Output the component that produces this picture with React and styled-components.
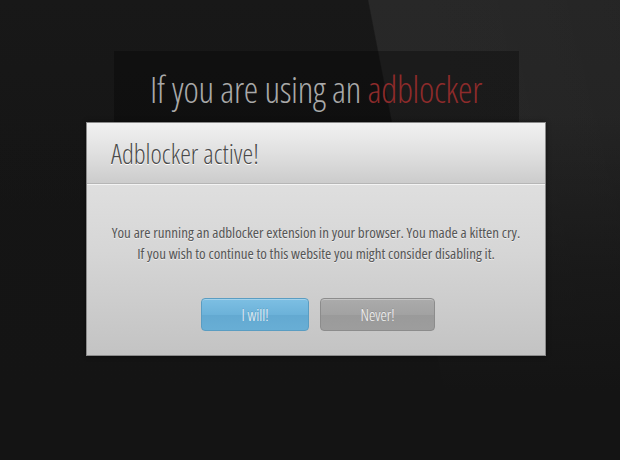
import styled, { createGlobalStyle } from "styled-components"

const GlobalStyle = createGlobalStyle`
    html, body {
        margin: 0;
        padding: 0;
        height: 100%;
    }
    body {
        background: #141414;
        font-family: "Open Sans", "Liberation Sans", sans-serif;
    }
`

const Page = styled.div`
    width: 620px;
    height: 460px;
    overflow: hidden;
    background:
        linear-gradient(180deg, rgba(20,20,20,0) 0%, rgba(20,20,20,0) 25%, rgba(20,20,20,0.7) 60%, #141414 85%),
        linear-gradient(79deg, rgba(0,0,0,0) 0%, rgba(0,0,0,0) 64.4%, rgba(255,255,255,0.07) 64.6%, rgba(255,255,255,0.065) 85%, rgba(255,255,255,0.06) 100%),
        linear-gradient(180deg, #181818 0%, #151515 45%, #141414 100%);
    display: flex;
    justify-content: center;
    padding: 51px 0 0 12px;
    box-sizing: border-box;
`

const Stage = styled.div`
    width: 405px;
    display: flex;
    flex-direction: column;
    align-items: center;
`

const Banner = styled.div`
    width: 100%;
    height: 150px;
    background: rgba(0, 0, 0, 0.3);
    display: flex;
    justify-content: center;
    padding-top: 14px;
    box-sizing: border-box;
`

const Headline = styled.h1`
    margin: 0;
    font-family: "Open Sans", sans-serif;
    font-weight: 300;
    font-stretch: 75%;
    font-size: 36.5px;
    line-height: 48px;
    color: #a9a9a9;
    letter-spacing: -0.3px;
`

const Accent = styled.span`
    color: #8e2b2b;
`

const Modal = styled.div`
    margin-top: -79px;
    width: 458px;
    border: 1px solid #8a8a8a;
    box-shadow: 0 0 4px rgba(0, 0, 0, 0.5);
    background: linear-gradient(180deg, #e7e7e7 0%, #d6d6d6 55%, #c3c3c3 100%);
`

const Header = styled.div`
    height: 60px;
    padding-left: 24px;
    display: flex;
    align-items: center;
    background: linear-gradient(180deg, #f1f1f1 0%, #e0e0e0 50%, #cccccc 100%);
    border-bottom: 1px solid #b6b6b6;
    box-shadow: 0 1px 0 #f4f4f4;
`

const HeaderTitle = styled.h2`
    margin: 0;
    font-family: "Open Sans", sans-serif;
    font-weight: 300;
    font-stretch: 75%;
    font-size: 27px;
    color: #4a4a4a;
    text-shadow: 0 1px 0 #fff;
`

const Body = styled.div`
    padding: 38px 20px 24px;
    display: flex;
    flex-direction: column;
    align-items: center;
`

const Message = styled.p`
    margin: 0;
    text-align: center;
    font-family: "Open Sans", sans-serif;
    font-weight: 400;
    font-stretch: 75%;
    font-size: 15px;
    line-height: 21px;
    color: #555;
    text-shadow: 0 1px 0 rgba(255, 255, 255, 0.6);
`

const Actions = styled.div`
    margin: 34px 0 0 4px;
    display: flex;
    gap: 11px;
`

const Button = styled.button`
    width: ${props => props.wide ? "115px" : "108px"};
    height: 33px;
    border-radius: 4px;
    font-family: "Open Sans", sans-serif;
    font-weight: 300;
    font-stretch: 75%;
    font-size: 16px;
    color: #f8f8f8;
    cursor: pointer;
    border: 1px solid ${props => props.primary ? "#5a9dc2" : "#8c8c8c"};
    background: ${props => props.primary
        ? "linear-gradient(180deg, #7dbfe3 0%, #6cb2d9 50%, #63a9d1 51%, #68aed5 100%)"
        : "linear-gradient(180deg, #ababab 0%, #a2a2a2 50%, #9a9a9a 51%, #9d9d9d 100%)"};
    box-shadow: inset 0 1px 0 rgba(255, 255, 255, 0.3);
    text-shadow: 0 -1px 0 rgba(0, 0, 0, 0.15);
`

const App = () => {
    return (
        <>
            <GlobalStyle />
            <Page>
                <Stage>
                    <Banner>
                        <Headline>If you are using an <Accent>adblocker</Accent></Headline>
                    </Banner>
                    <Modal>
                        <Header>
                            <HeaderTitle>Adblocker active!</HeaderTitle>
                        </Header>
                        <Body>
                            <Message>
                                You are running an adblocker extension in your browser. You made a kitten cry.<br />
                                If you wish to continue to this website you might consider disabling it.
                            </Message>
                            <Actions>
                                <Button primary>I will!</Button>
                                <Button wide>Never!</Button>
                            </Actions>
                        </Body>
                    </Modal>
                </Stage>
            </Page>
        </>
    )
}

export default App
